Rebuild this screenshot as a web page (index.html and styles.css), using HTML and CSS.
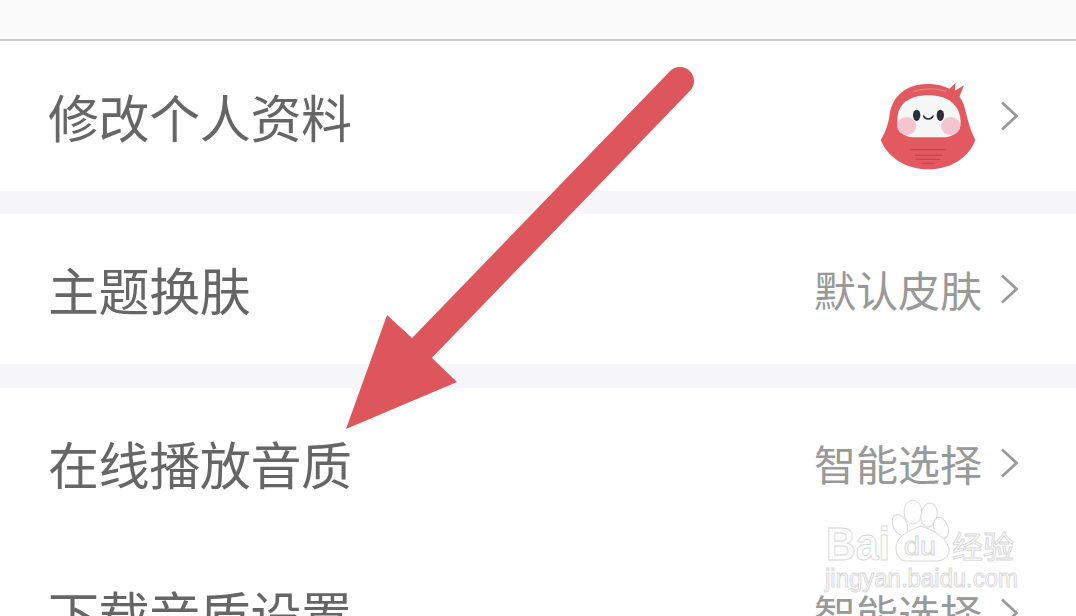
FILE: index.html
```html
<!DOCTYPE html>
<html>

<head lang="en">
  <meta charset="UTF-8">
  <title>设置</title>
  <link rel="stylesheet" href="styles.css">
</head>

<body>
  <div class="page">
    <div class="topbar"></div>

    <div class="row">
      <span class="label">修改个人资料</span>
      <div class="right">
        <svg class="avatar" viewBox="60 60 300 285">
          <path d="M262 92L287 68L284 92L312 76L296 116Z" fill="#e2595f" />
          <path d="M62 240C72 222 82 205 88 170C94 115 130 76 195 72C250 70 296 90 312 135C320 165 328 205 346 240C328 290 275 328 205 328C135 328 82 290 62 240Z" fill="#e2595f" />
          <path d="M160 95C190 84 230 84 258 94" fill="none" stroke="#ea7d80" stroke-width="4" stroke-linecap="round" />
          <path d="M112 180C112 130 150 106 205 106C265 106 300 135 302 185C303 215 280 232 245 232L160 232C130 232 112 212 112 180Z" fill="#f6f8f7" />
          <ellipse cx="140" cy="198" rx="29" ry="27" fill="#f4c4d0" />
          <ellipse cx="272" cy="198" rx="29" ry="27" fill="#f4c4d0" />
          <ellipse cx="170" cy="166" rx="11" ry="17" fill="#2e2b3a" />
          <ellipse cx="241" cy="166" rx="11" ry="17" fill="#2e2b3a" />
          <path d="M191 168C196 180 214 180 219 168" fill="none" stroke="#2e2b3a" stroke-width="5" stroke-linecap="round" />
          <path d="M152 269H256M166 286H244M168 298H240M184 310H224" stroke="#c9434f" stroke-width="4" stroke-linecap="round" />
        </svg>
        <svg class="chevron" viewBox="0 0 18 34">
          <path d="M2 3.5L16.5 17L2 30.5" />
        </svg>
      </div>
    </div>

    <div class="gap"></div>

    <div class="row">
      <span class="label">主题换肤</span>
      <div class="right">
        <span class="value">默认皮肤</span>
        <svg class="chevron" viewBox="0 0 18 34">
          <path d="M2 3.5L16.5 17L2 30.5" />
        </svg>
      </div>
    </div>

    <div class="gap gap-tall"></div>

    <div class="row">
      <span class="label">在线播放音质</span>
      <div class="right">
        <span class="value">智能选择</span>
        <svg class="chevron" viewBox="0 0 18 34">
          <path d="M2 3.5L16.5 17L2 30.5" />
        </svg>
      </div>
    </div>

    <div class="row">
      <span class="label">下载音质设置</span>
      <div class="right">
        <span class="value">智能选择</span>
        <svg class="chevron" viewBox="0 0 18 34">
          <path d="M2 3.5L16.5 17L2 30.5" />
        </svg>
      </div>
    </div>

    <!-- 截图上加的箭头 -->
    <svg class="arrow" viewBox="0 0 1076 616">
      <path d="M680 81L420 350" stroke="#dc565c" stroke-width="28" stroke-linecap="round" fill="none" />
      <polygon points="346,429 387,315 412,338 432,358 457,382" fill="#dc565c" />
    </svg>

    <!-- 水印 -->
    <svg class="mark" viewBox="0 0 276 126">
      <g fill="#fff" stroke="#d8d8d8" stroke-width="1">
        <ellipse cx="113" cy="22" rx="9" ry="12" />
        <ellipse cx="129" cy="25" rx="8" ry="12" transform="rotate(10 129 25)" />
        <ellipse cx="100" cy="35" rx="7" ry="11" transform="rotate(-25 100 35)" />
        <ellipse cx="141" cy="38" rx="7" ry="11" transform="rotate(-20 141 38)" />
        <path d="M96 58C96 46 110 40 121 36C133 40 148 48 149 60C149 67 143 71 136 71H106C100 71 96 65 96 58Z" />
        <text class="mark-big" x="26" y="70" textLength="64" lengthAdjust="spacingAndGlyphs">Bai</text>
        <text class="mark-du" x="104" y="65" textLength="32" lengthAdjust="spacingAndGlyphs">du</text>
        <text class="mark-cn" x="152" y="68" textLength="62" lengthAdjust="spacingAndGlyphs">经验</text>
        <text class="mark-url" x="25" y="97" textLength="193" lengthAdjust="spacingAndGlyphs">jingyan.baidu.com</text>
      </g>
    </svg>
  </div>
</body>

</html>
```
FILE: styles.css
```css
* {
  margin: 0;
  padding: 0;
  box-sizing: border-box;
}

body {
  background: #fff;
  font-family: "Noto Sans CJK SC", "Liberation Sans", sans-serif;
  overflow: hidden;
}

.page {
  width: 1076px;
  height: 616px;
  position: relative;
  overflow: hidden;
}

.topbar {
  height: 41px;
  background: #fafafa;
  border-bottom: 2px solid #ccc;
}

.row {
  height: 150px;
  padding: 0 58px 0 48px;
  display: flex;
  align-items: center;
  justify-content: space-between;
  background: #fff;
}

.gap {
  height: 23px;
  background: #f6f6f8;
}

.gap-tall {
  height: 24px;
}

.label {
  font-size: 51px;
  letter-spacing: -0.4px;
  color: #666;
  line-height: 1;
}

.right {
  display: flex;
  align-items: center;
  gap: 18px;
}

.value {
  font-size: 42px;
  color: #999;
  line-height: 1;
}

.avatar {
  width: 100px;
  height: 95px;
  margin: 22px 2px 0 0;
}

.chevron {
  width: 18px;
  height: 34px;
  fill: none;
  stroke: #999;
  stroke-width: 2.6;
}

.arrow {
  position: absolute;
  left: 0;
  top: 0;
  width: 1076px;
  height: 616px;
}

.mark {
  position: absolute;
  left: 800px;
  top: 490px;
  width: 276px;
  height: 126px;
}

.mark text {
  font-family: "Liberation Sans", "Noto Sans CJK SC", sans-serif;
}

.mark-big {
  font-size: 46px;
  font-weight: bold;
}

.mark-du {
  font-size: 26px;
}

.mark-cn {
  font-size: 31px;
}

.mark-url {
  font-size: 25px;
}
```
